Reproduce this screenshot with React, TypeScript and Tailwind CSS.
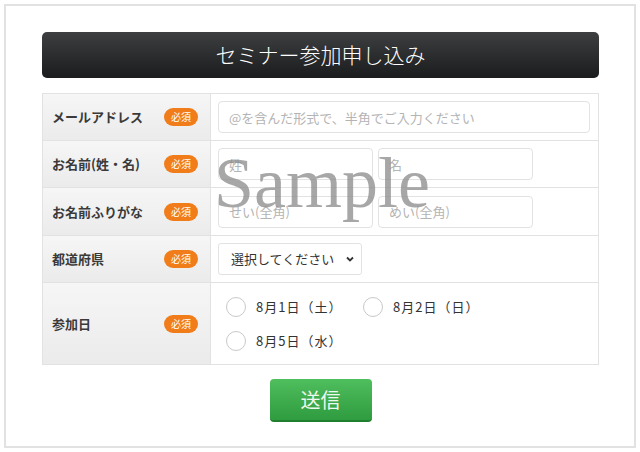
import React from 'react';

const jp = "font-['Noto_Sans_CJK_JP','Noto_Sans',sans-serif]";

const Badge = () => (
  <span className="flex h-[18px] w-[34px] items-center justify-center rounded-full bg-[#f07d1a] text-[10px] leading-none text-white">
    必須
  </span>
);

const Label = ({ text, last }: { text: string; last?: boolean }) => (
  <div
    className={`flex items-center justify-between bg-gradient-to-b from-[#f6f6f6] to-[#ebebeb] pl-[9px] pr-[12px] ${
      last ? '' : 'border-b border-[#e2e2e2]'
    } border-r border-r-[#e2e2e2]`}
  >
    <span className="text-[13px] font-bold text-[#3a3a3a]">{text}</span>
    <Badge />
  </div>
);

const inputCls =
  'h-[32px] rounded-[4px] border border-[#e2e2e2] bg-white px-[10px] text-[13px] text-[#333] outline-none placeholder:text-[#b4b4b4]';

const Radio = ({ label }: { label: string }) => (
  <label className="flex items-center gap-[10px]">
    <span className="h-[20px] w-[20px] rounded-full border-[1.5px] border-[#c9c9c9] bg-white" />
    <span className="text-[13px] tracking-[1px] text-[#333]">{label}</span>
  </label>
);

const App = () => {
  const rows = [
    { label: 'メールアドレス' },
    { label: 'お名前(姓・名)' },
    { label: 'お名前ふりがな' },
    { label: '都道府県' },
  ];

  return (
    <div className={`h-[452px] w-[640px] bg-white p-1 ${jp}`}>
      <div className="relative h-[444px] border-2 border-[#e2e2e2] pl-[36px] pt-[26px]">
        <div className="flex h-[46px] w-[557px] items-center justify-center rounded-[5px] bg-gradient-to-b from-[#3e3f41] to-[#1b1c1e] text-[21px] font-light text-white">
          セミナー参加申し込み
        </div>

        <div className="mt-[15px] grid w-[557px] grid-cols-[168px_1fr] grid-rows-[47px_47px_48px_47px_81px] border border-[#e2e2e2]">
          <Label text={rows[0].label} />
          <div className="flex items-center border-b border-[#e2e2e2] pl-[7px] pr-[8px]">
            <input className={`${inputCls} w-full`} placeholder="@を含んだ形式で、半角でご入力ください" />
          </div>

          <Label text={rows[1].label} />
          <div className="flex items-center gap-[5px] border-b border-[#e2e2e2] pl-[7px]">
            <input className={`${inputCls} w-[155px]`} placeholder="姓" />
            <input className={`${inputCls} w-[155px]`} placeholder="名" />
          </div>

          <Label text={rows[2].label} />
          <div className="flex items-center gap-[5px] border-b border-[#e2e2e2] pl-[7px]">
            <input className={`${inputCls} w-[155px]`} placeholder="せい(全角)" />
            <input className={`${inputCls} w-[155px]`} placeholder="めい(全角)" />
          </div>

          <Label text={rows[3].label} />
          <div className="flex items-center border-b border-[#e2e2e2] pl-[7px]">
            <div className="flex h-[32px] w-[144px] items-center justify-between rounded-[3px] border border-[#e2e2e2] bg-white pl-[12px] pr-[6px] text-[13px] text-[#333]">
              <span>選択してください</span>
              <svg width="10" height="10" viewBox="0 0 10 10">
                <path d="M2 3.5 L5 6.5 L8 3.5" fill="none" stroke="#333" strokeWidth="1.8" />
              </svg>
            </div>
          </div>

          <Label text="参加日" last />
          <div className="flex flex-col justify-center gap-[14px] pl-[15px]">
            <div className="flex items-center">
              <div className="w-[137px]">
                <Radio label="8月1日（土）" />
              </div>
              <Radio label="8月2日（日）" />
            </div>
            <Radio label="8月5日（水）" />
          </div>
        </div>

        <div className="flex w-[557px] justify-center pt-[14px]">
          <button className="h-[43px] w-[102px] rounded-[4px] border-b-2 border-[#1f7f2f] bg-gradient-to-b from-[#4fbe5d] to-[#2e9c3f] text-[20px] text-[#eef8ee]">
            送信
          </button>
        </div>

        <div className="pointer-events-none absolute left-[208px] top-[141px] font-['Liberation_Serif',serif] text-[72px] leading-none text-[#8a8a8a] opacity-75">
          Sample
        </div>
      </div>
    </div>
  );
};

export default App;
